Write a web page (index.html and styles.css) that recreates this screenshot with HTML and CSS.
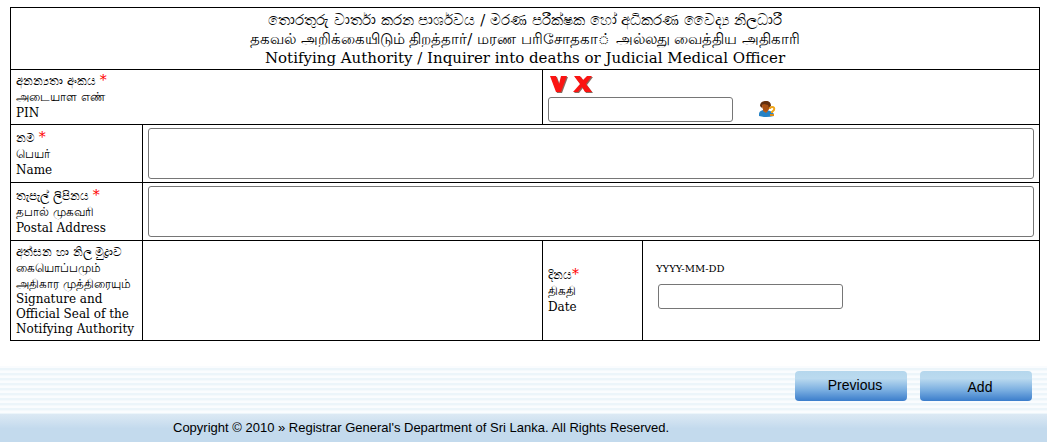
FILE: index.html
```
<!DOCTYPE html>
<html lang="en">
<head>
<meta charset="utf-8">
<title>Notifying Authority</title>
<link rel="stylesheet" href="styles.css">
</head>
<body>
<form class="page">
  <table class="form">
    <colgroup><col class="c-label"><col class="c-wide"><col class="c-date"><col></colgroup>
    <tr>
      <th class="heading" colspan="4">
        <span class="line" lang="si">තොරතුරු වාර්තා කරන පාර්ශවය / මරණ පරීක්ෂක හෝ අධිකරණ වෛද්‍ය නිලධාරී</span>
        <span class="line" lang="ta">தகவல் அறிக்கையிடும் திறத்தார்/ மரண பரிசோதகா&#x25CC;் அல்லது வைத்திய அதிகாரி</span>
        <span class="line">Notifying Authority / Inquirer into deaths or Judicial Medical Officer</span>
      </th>
    </tr>
    <tr>
      <td colspan="2">
        <label class="label" for="pin">
          <span class="line" lang="si">අනන්‍යතා අංකය <span class="required">*</span></span>
          <span class="line" lang="ta">அடையாள எண்</span>
          <span class="line">PIN</span>
        </label>
      </td>
      <td class="pin" colspan="2">
        <div class="marks">
          <svg width="46" height="19" viewBox="0 0 46 19" aria-hidden="true">
            <g fill="#8a6a60" transform="translate(1 1)"><path d="M2 0h6l3 8 2-8h6l-6 16H8z"/><path d="M26 0h6l3 4 4-4h5l-6 8 6 8h-7l-3-5-4 5h-5l7-8z"/></g>
            <g fill="#fb1412"><path d="M2 0h6l3 8 2-8h6l-6 16H8z"/><path d="M26 0h6l3 4 4-4h5l-6 8 6 8h-7l-3-5-4 5h-5l7-8z"/></g>
          </svg>
        </div>
        <div class="pin-entry">
          <input class="field" id="pin" type="text">
          <button class="lookup" type="button" aria-label="Find person">
            <svg width="18" height="18" viewBox="0 0 18 18" aria-hidden="true">
              <path d="M1 16v-2q0-3 4-4h4q5 1 7 4v2q-8 2-15 0z" fill="#2582c5"/>
              <path d="M5 9h5v2l-2 2-3-2z" fill="#b95f19"/>
              <ellipse cx="8" cy="6" rx="4" ry="5" fill="#a85012"/>
              <path d="M2 6Q2 1 8 1q5 0 5 5l-2 2-1-3-4-1-2 1v3z" fill="#63300f"/>
              <path d="M12 9q0-2 2-2 3 0 2 3l-2 2v1" fill="none" stroke="#efa51c" stroke-width="2"/>
              <path d="M12 14h4v2h-4z" fill="#dd8c13"/>
            </svg>
          </button>
        </div>
      </td>
    </tr>
    <tr>
      <td>
        <label class="label" for="name">
          <span class="line" lang="si">නම <span class="required">*</span></span>
          <span class="line" lang="ta">பெயர்</span>
          <span class="line">Name</span>
        </label>
      </td>
      <td class="area-cell" colspan="3"><textarea class="area" id="name"></textarea></td>
    </tr>
    <tr>
      <td>
        <label class="label" for="address">
          <span class="line" lang="si">තැපැල් ලිපිනය <span class="required">*</span></span>
          <span class="line" lang="ta">தபால் முகவரி</span>
          <span class="line">Postal Address</span>
        </label>
      </td>
      <td class="area-cell" colspan="3"><textarea class="area" id="address"></textarea></td>
    </tr>
    <tr>
      <td>
        <div class="label">
          <span class="line" lang="si">අත්සන හා නිල මුද්‍රාව</span>
          <span class="line" lang="ta">கையொப்பமும்<br>அதிகார முத்திரையும்</span>
          <span class="line seal">Signature and<br>Official Seal of the<br>Notifying Authority</span>
        </div>
      </td>
      <td></td>
      <td>
        <label class="label" for="date">
          <span class="line" lang="si">දිනය<span class="required">*</span></span>
          <span class="line" lang="ta">திகதி</span>
          <span class="line">Date</span>
        </label>
      </td>
      <td class="date">
        <div class="hint">YYYY-MM-DD</div>
        <input class="field" id="date" type="text">
      </td>
    </tr>
  </table>
  <div class="actions">
    <button class="action previous" type="button">Previous</button>
    <button class="action add" type="submit">Add</button>
  </div>
</form>
<footer class="footer">Copyright © 2010 » Registrar General's Department of Sri Lanka. All Rights Reserved.</footer>
</body>
</html>
```
FILE: styles.css
```
* { box-sizing: border-box; }

body {
  margin: 0;
  background: #fff;
  color: #000;
  font-family: "DejaVu Serif", serif;
  font-size: 12px;
}

.page { padding-top: 7px; }

.form {
  width: calc(100% - 17px);
  margin: 0 7px 25px 10px;
  border-collapse: collapse;
  table-layout: fixed;
}

.c-label { width: 132px; }
.c-wide { width: 400px; }
.c-date { width: 100px; }

.form td,
.form th {
  border: 1px solid #000;
  padding: 3px 5px;
  vertical-align: middle;
}

.line { display: block; }

.form .heading {
  padding: 3px 5px 1px;
  font-size: 15px;
  font-weight: normal;
  line-height: 19px;
  text-align: center;
}

.label {
  display: block;
  font-size: 12px;
  line-height: 16px;
  white-space: nowrap;
}

.seal { line-height: 15px; }

.required {
  color: #f00;
  font-size: 14px;
  line-height: 0;
}

.marks { height: 23px; padding-top: 2px; }
.marks svg, .lookup svg { display: block; }

.pin-entry {
  display: flex;
  align-items: center;
  gap: 25px;
}

.form .pin { padding-bottom: 2px; }

.field {
  display: block;
  width: 185px;
  height: 25px;
  border: 1px solid #767676;
  border-radius: 3px;
  background: #fff;
}

.lookup {
  padding: 0;
  border: 0;
  background: none;
}

.area {
  display: block;
  width: 100%;
  height: 51px;
  border: 1px solid #767676;
  border-radius: 3px;
  resize: none;
}

.form .date { padding: 0 13px 9px; }
.hint { font-size: 10px; margin-bottom: 10px; }
.date .field { margin-left: 2px; }

.actions {
  display: flex;
  justify-content: flex-end;
  gap: 13px;
  padding: 5px 15px 13px;
  background: repeating-linear-gradient(#fafcfe 0 2px, #ecf5fa 2px 4px, #f4f9fc 4px 5px);
}

.action {
  width: 112px;
  height: 30px;
  border: 0;
  border-radius: 4px;
  background: linear-gradient(#b5d7ed, #bbdaef 25%, #78ade0 65%, #3b7dcb);
  color: #000;
  font: 14px "Liberation Sans", Arial, sans-serif;
}

.previous { padding: 0 0 2px 8px; }
.add { padding: 2px 0 0 8px; }

.footer {
  padding: 6px 173px 7px;
  background: linear-gradient(#dce9f4, #c3daed 50%);
  font: 13px/16px "Liberation Sans", Arial, sans-serif;
}
```
